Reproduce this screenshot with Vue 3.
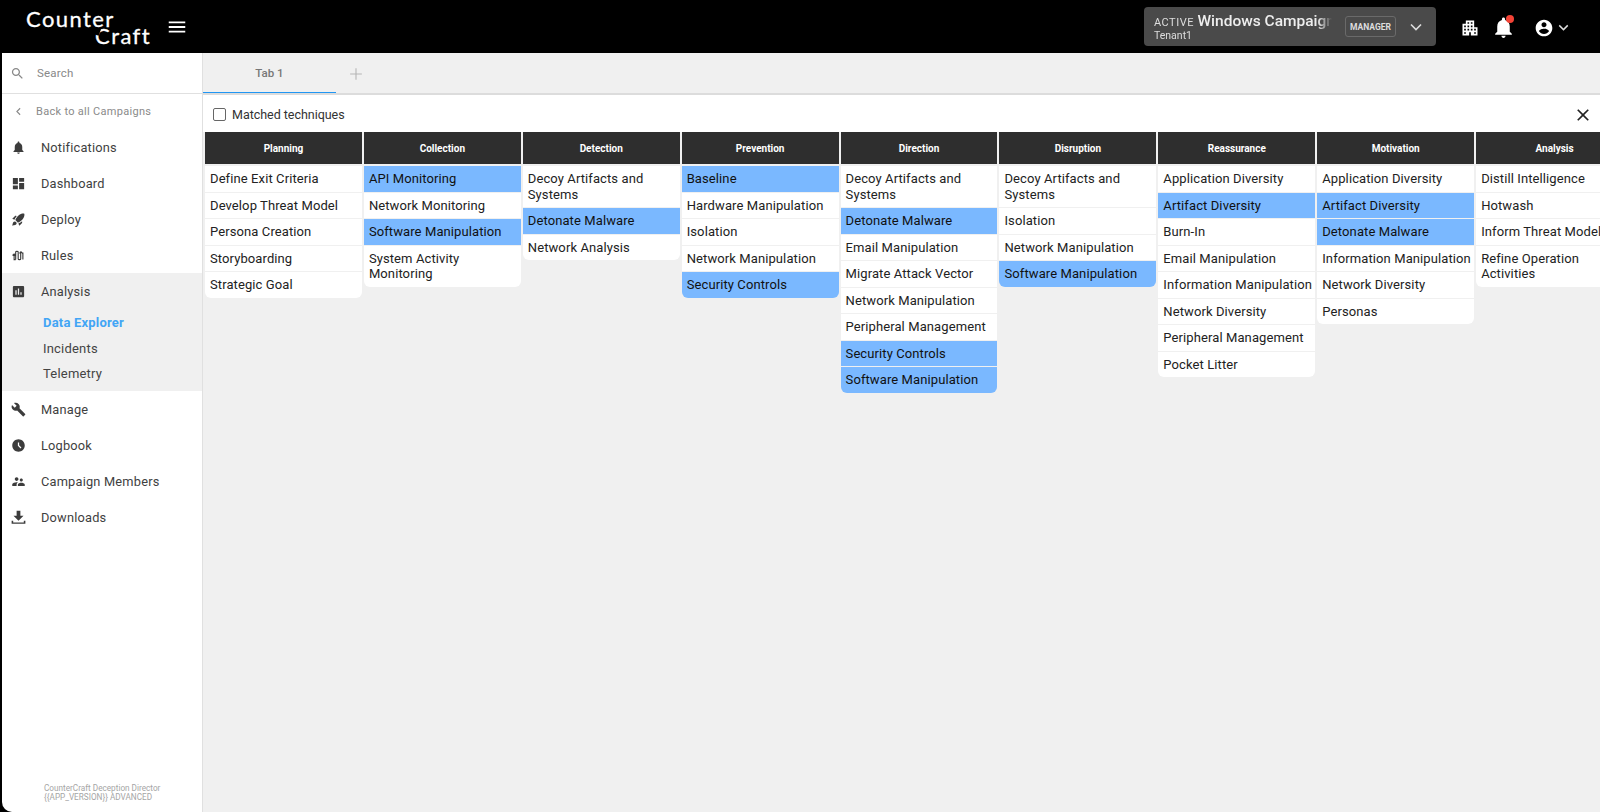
<script setup>
const nav1 = [
  { label: 'Notifications', d: 'M12 22c1.1 0 2-.9 2-2h-4c0 1.1.89 2 2 2zm6-6v-5c0-3.07-1.64-5.64-4.5-6.32V4c0-.83-.67-1.5-1.5-1.5s-1.5.67-1.5 1.5v.68C7.63 5.36 6 7.92 6 11v5l-2 2v1h16v-1l-2-2z' },
  { label: 'Dashboard', d: 'M3 13h8V3H3v10zm0 8h8v-6H3v6zm10 0h8V11h-8v10zm0-18v6h8V3h-8z' },
  { label: 'Deploy', d: 'M9.19 6.35c-2.04 2.29-3.44 5.58-3.57 5.89L2 10.69l4.05-4.05c.47-.47 1.15-.68 1.81-.55l1.33.26zM11.17 17s3.74-1.55 5.89-3.7c5.4-5.4 4.5-9.62 4.21-10.57-.95-.3-5.17-1.19-10.57 4.21C8.55 9.09 7 12.83 7 12.83L11.17 17zm6.48-2.19c-2.29 2.04-5.58 3.44-5.89 3.57L13.31 22l4.05-4.05c.47-.47.68-1.15.55-1.81l-.26-1.33zM9 18c0 .83-.34 1.58-.88 2.12C6.94 21.3 2 22 2 22s.7-4.94 1.88-6.12C4.42 15.34 5.17 15 6 15c1.66 0 3 1.34 3 3z' },
  { label: 'Rules', stroke: 'M2.500 12l2.500-2.500L7.500 12M5 10v8.500h2.500M7.500 18.500V6.500c0-1.500 4-1.500 4 0v11c0 1.500 4 1.500 4 0V5.500M13.500 8.500L16 6l2.500 2.500M19 7v11.500' },
]
const nav2 = [
  { label: 'Manage', d: 'M22.7 19l-9.1-9.1c.9-2.3.4-5-1.5-6.9-2-2-5-2.4-7.4-1.3L9 6 6 9 1.6 4.7C.4 7.1.9 10.1 2.9 12.1c1.9 1.9 4.6 2.4 6.9 1.5l9.1 9.1c.4.4 1 .4 1.4 0l2.3-2.3c.5-.4.5-1.1.1-1.4z' },
  { label: 'Logbook', d: 'M11.99 2C6.47 2 2 6.48 2 12s4.47 10 9.99 10C17.52 22 22 17.52 22 12S17.52 2 11.99 2zm3.3 14.71L11 12.41V7h2v4.59l3.71 3.71-1.42 1.41z' },
  { label: 'Campaign Members', d: 'M16.5 12c1.38 0 2.49-1.12 2.49-2.5S17.88 7 16.5 7C15.12 7 14 8.12 14 9.5s1.12 2.5 2.5 2.5zM9 11c1.66 0 2.99-1.34 2.99-3S10.66 5 9 5C7.34 5 6 6.34 6 8s1.34 3 3 3zm7.5 3c-1.83 0-5.5.92-5.5 2.75V19h11v-2.25c0-1.83-3.67-2.75-5.5-2.75zM9 13c-2.33 0-7 1.17-7 3.5V19h7v-2.25c0-.85.33-2.34 2.37-3.47C10.5 13.1 9.66 13 9 13z' },
  { label: 'Downloads', d: 'M9 1h6v8h5l-8 8-8-8h5zM1 17h2.500v3h17v-3H23v5H1z' },
]
const analysisIcon = 'M19 3H5c-1.1 0-2 .9-2 2v14c0 1.1.9 2 2 2h14c1.1 0 2-.9 2-2V5c0-1.1-.9-2-2-2zM9 17H7v-7h2v7zm4 0h-2V7h2v10zm4 0h-2v-4h2v4z'
const h = (t) => ({ t, on: true })
const columns = [
  { name: 'Planning', items: ['Define Exit Criteria', 'Develop Threat Model', 'Persona Creation', 'Storyboarding', 'Strategic Goal'] },
  { name: 'Collection', items: [h('API Monitoring'), 'Network Monitoring', h('Software Manipulation'), 'System Activity Monitoring'] },
  { name: 'Detection', items: ['Decoy Artifacts and Systems', h('Detonate Malware'), 'Network Analysis'] },
  { name: 'Prevention', items: [h('Baseline'), 'Hardware Manipulation', 'Isolation', 'Network Manipulation', h('Security Controls')] },
  { name: 'Direction', items: ['Decoy Artifacts and Systems', h('Detonate Malware'), 'Email Manipulation', 'Migrate Attack Vector', 'Network Manipulation', 'Peripheral Management', h('Security Controls'), h('Software Manipulation')] },
  { name: 'Disruption', items: ['Decoy Artifacts and Systems', 'Isolation', 'Network Manipulation', h('Software Manipulation')] },
  { name: 'Reassurance', items: ['Application Diversity', h('Artifact Diversity'), 'Burn-In', 'Email Manipulation', 'Information Manipulation', 'Network Diversity', 'Peripheral Management', 'Pocket Litter'] },
  { name: 'Motivation', items: ['Application Diversity', h('Artifact Diversity'), h('Detonate Malware'), 'Information Manipulation', 'Network Diversity', 'Personas'] },
  { name: 'Analysis', items: ['Distill Intelligence', 'Hotwash', 'Inform Threat Model', 'Refine Operation Activities'] },
].map((c) => ({ name: c.name, items: c.items.map((i) => (typeof i === 'string' ? { t: i, on: false } : i)) }))
</script>

<template>
  <div class="app">
    <header class="top">
      <div class="logo">
        <div class="l1">Counter</div>
        <div class="l2"><span class="bigc">C</span>raft</div>
      </div>
      <svg class="menu" viewBox="0 0 24 24"><path d="M3 18h18v-2H3v2zm0-5h18v-2H3v2zm0-7v2h18V6H3z" /></svg>
      <div class="spacer"></div>
      <div class="campaign">
        <div class="ctext">
          <div class="cline"><span class="active">ACTIVE</span><span class="cname">Windows Campaign</span></div>
          <div class="tenant">Tenant1</div>
        </div>
        <span class="badge">MANAGER</span>
        <svg class="chev" viewBox="0 0 24 24"><path d="M6 9l6 6 6-6" /></svg>
      </div>
      <svg class="domain" viewBox="0 0 24 24"><path d="M17 11V3H7v4H3v14h8v-4h2v4h8V11h-4zM7 19H5v-2h2v2zm0-4H5v-2h2v2zm0-4H5V9h2v2zm4 4H9v-2h2v2zm0-4H9V9h2v2zm0-4H9V5h2v2zm4 8h-2v-2h2v2zm0-4h-2V9h2v2zm0-4h-2V5h2v2zm4 12h-2v-2h2v2zm0-4h-2v-2h2v2z" /></svg>
      <div class="bell">
        <svg viewBox="0 0 24 24"><path d="M12 22c1.100 0 2-.9 2-2h-4c0 1.100.89 2 2 2zm6-6v-5c0-3.070-1.640-5.640-4.500-6.320V4c0-.83-.67-1.500-1.500-1.500s-1.500.67-1.500 1.500v.68C7.630 5.360 6 7.920 6 11v5l-2 2v1h16v-1l-2-2z" /></svg>
        <i class="dot"></i>
      </div>
      <svg class="acct" viewBox="0 0 24 24"><path d="M12 2C6.480 2 2 6.480 2 12s4.480 10 10 10 10-4.480 10-10S17.520 2 12 2zm0 3c1.660 0 3 1.340 3 3s-1.340 3-3 3-3-1.340-3-3 1.340-3 3-3zm0 14.200c-2.500 0-4.710-1.280-6-3.220.03-1.990 4-3.080 6-3.080 1.990 0 5.970 1.090 6 3.080-1.290 1.940-3.500 3.220-6 3.220z" /></svg>
      <svg class="chev2" viewBox="0 0 24 24"><path d="M6 9l6 6 6-6" /></svg>
    </header>

    <div class="body">
      <aside class="side">
        <div class="search">
          <svg viewBox="0 0 24 24"><path d="M15.500 14h-.79l-.28-.27C15.410 12.590 16 11.110 16 9.500 16 5.910 13.090 3 9.500 3S3 5.910 3 9.500 5.910 16 9.500 16c1.610 0 3.090-.59 4.230-1.570l.27.28v.79l5 4.990L20.490 19l-4.990-5zm-6 0C7.010 14 5 11.990 5 9.500S7.010 5 9.500 5 14 7.010 14 9.500 11.990 14 9.500 14z" /></svg>
          <span>Search</span>
        </div>
        <div class="back">
          <svg viewBox="0 0 24 24"><path d="M15 6l-6 6 6 6" /></svg>
          <span>Back to all Campaigns</span>
        </div>
        <div v-for="n in nav1" :key="n.label" class="nav">
          <svg viewBox="0 0 24 24">
            <path v-if="n.d" :d="n.d" />
            <path v-else class="st" :d="n.stroke" />
          </svg>
          <span>{{ n.label }}</span>
        </div>
        <div class="group">
          <div class="nav">
            <svg viewBox="0 0 24 24"><path :d="analysisIcon" /></svg>
            <span>Analysis</span>
          </div>
          <div class="sub cur">Data Explorer</div>
          <div class="sub">Incidents</div>
          <div class="sub">Telemetry</div>
        </div>
        <div v-for="n in nav2" :key="n.label" class="nav">
          <svg viewBox="0 0 24 24"><path :d="n.d" /></svg>
          <span>{{ n.label }}</span>
        </div>
        <div class="foot">CounterCraft Deception Director<br />{{ '{' }}{APP_VERSION}} ADVANCED</div>
      </aside>

      <main class="main">
        <div class="tabs">
          <div class="tab">Tab 1</div>
          <svg class="plus" viewBox="0 0 24 24"><path d="M12 5v14M5 12h14" /></svg>
        </div>
        <div class="panel">
          <div class="bar">
            <label class="check"><i class="box"></i><span>Matched techniques</span></label>
            <svg class="close" viewBox="0 0 24 24"><path d="M19 6.410L17.590 5 12 10.590 6.410 5 5 6.410 10.590 12 5 17.590 6.410 19 12 13.410 17.590 19 19 17.590 13.410 12z" /></svg>
          </div>
        </div>
        <div class="matrix">
          <div v-for="c in columns" :key="c.name" class="col">
            <div class="head">{{ c.name }}</div>
            <div class="list">
              <div v-for="it in c.items" :key="it.t" class="item" :class="{ on: it.on }">{{ it.t }}</div>
            </div>
          </div>
        </div>
      </main>
    </div>
  </div>
</template>

<style>
html, body { margin: 0; background: #000; overflow: hidden; }
</style>

<style scoped>
* { box-sizing: border-box; }
.app {
  width: 1600px; height: 812px; display: flex; flex-direction: column;
  font-family: Roboto, "Liberation Sans", sans-serif; background: #000; overflow: hidden;
}
.top { height: 53px; flex: none; display: flex; align-items: center; background: #000; color: #fff; }
.logo { width: 125px; margin-left: 26px; font-family: Lato, Roboto, sans-serif; font-weight: 400; -webkit-text-stroke: .3px #fff; font-size: 22px; letter-spacing: 1.4px; line-height: 17px; }
.l2 { text-align: right; }
.bigc { position: relative; display: inline-block; }
.bigc::after { content: ""; position: absolute; left: -1px; top: 1px; width: 6px; height: 7px; background: #000; transform: rotate(20deg); }
.menu { width: 22px; height: 22px; margin-left: 15px; fill: #fff; }
.spacer { flex: 1; }
.campaign {
  width: 292px; height: 39px; background: #4a4a4a; border-radius: 4px; display: flex; align-items: center;
  margin-right: 24px; padding-left: 10px;
}
.ctext { width: 178px; margin-right: 13px; flex: none; overflow: hidden; -webkit-mask-image: linear-gradient(to right, #000 92%, transparent 100%); mask-image: linear-gradient(to right, #000 92%, transparent 100%); }
.cline { display: flex; align-items: baseline; white-space: nowrap; height: 17px; }
.active { font-size: 11px; letter-spacing: .5px; margin-right: 3.500px; color: #ddd; }
.cname { font-size: 15.500px; font-weight: 500; color: #eee; }
.tenant { font-size: 10.500px; line-height: 11px; margin-top: 1px; color: #ddd; }
.badge { border: 1px solid #6a6a6a; border-radius: 3px; font-size: 8.500px; font-weight: 700; height: 21px; width: 51px; flex: none; display: flex; align-items: center; justify-content: center; color: #ddd; }
.chev { width: 20px; height: 20px; margin-left: 10px; fill: none; stroke: #ddd; stroke-width: 2; flex: none; }
.domain { width: 20px; height: 20px; fill: #fff; margin: 2px 11px 0 0; }
.bell { position: relative; width: 25px; height: 25px; margin: 2px 17.500px 0 0; }
.bell svg { width: 25px; height: 25px; fill: #fff; display: block; }
.dot { position: absolute; top: -.5px; right: 2px; width: 8px; height: 8px; border-radius: 50%; background: #f44336; }
.acct { width: 20px; height: 20px; fill: #fff; margin-top: 2px; }
.chev2 { width: 17px; height: 17px; margin: 1px 28.500px 0 1px; fill: none; stroke: #ddd; stroke-width: 2; }

.body { flex: 1; display: flex; min-height: 0; }
.side {
  width: 201px; margin-left: 2px; flex: none; background: #fff; border-right: 1px solid #e0e0e0; position: relative;
  border-bottom-left-radius: 10px; color: #3f3f3f;
}
.search { height: 41px; display: flex; align-items: center; padding-left: 8px; border-bottom: 1px solid #e0e0e0; color: #888; font-size: 11.500px; letter-spacing: .2px; }
.search svg { width: 15px; height: 15px; fill: #888; margin-right: 12px; }
.back { height: 35px; display: flex; align-items: center; padding-left: 10px; color: #8a8a8a; font-size: 11px; letter-spacing: .3px; }
.back svg { width: 13px; height: 13px; fill: none; stroke: #888; stroke-width: 2; margin-right: 11px; }
.nav { height: 36px; display: flex; align-items: center; padding-left: 9px; font-size: 12.800px; letter-spacing: .2px; }
.nav svg { width: 15px; height: 15px; fill: #3c3c3c; margin-right: 15px; flex: none; }
.st { fill: none; stroke: #3c3c3c; stroke-width: 1.800; }
.group { background: #f0f0f0; height: 118px; }
.sub { height: 25.700px; line-height: 25.700px; padding-left: 41px; font-size: 13px; letter-spacing: .2px; color: #444; }
.group .nav + .sub { margin-top: 1px; }
.cur { color: #42a5f5; font-weight: 700; }
.foot { position: absolute; left: 42px; bottom: 11px; font-size: 8.200px; line-height: 8.500px; color: #a5a5a5; }

.main { flex: 1; min-width: 0; background: #f0f0f0; display: flex; flex-direction: column; overflow: hidden; }
.tabs { height: 42px; flex: none; display: flex; align-items: center; border-bottom: 2px solid #dcdcdc; }
.tab { width: 133px; height: 40px; line-height: 41px; text-align: center; font-size: 11.500px; font-weight: 500; color: #777; border-bottom: 1px solid #2196f3; }
.plus { width: 20px; height: 20px; margin-left: 10px; margin-top: 2px; fill: none; stroke: #b5b5b5; stroke-width: 1.300; }
.panel { background: #fff; flex: none; }
.bar { height: 37px; display: flex; align-items: center; justify-content: space-between; padding: 2px 7px 0 9.500px; }
.check { display: flex; align-items: center; font-size: 12.500px; letter-spacing: -.03px; color: #333; }
.box { width: 13px; height: 13px; border: 1.500px solid #666; border-radius: 2px; margin-right: 6.500px; }
.close { width: 20px; height: 20px; fill: #222; }
.matrix { display: flex; gap: 2px; padding-left: 2px; }
.col { width: 156.900px; flex: none; }
.head { height: 32px; background: #2e2e2e; color: #fff; font-size: 10px; font-weight: 700; display: flex; align-items: center; justify-content: center; }
.list { margin-top: 2px; background: #f0f0f0; border-radius: 0 0 6px 6px; overflow: hidden; display: flex; flex-direction: column; gap: 1px; }
.item { background: #fff; padding: 5px 0 5px 5px; font-size: 13px; line-height: 15.500px; letter-spacing: .1px; color: #222; }
.item.on { background: #7ab8ff; color: #111; }
</style>
